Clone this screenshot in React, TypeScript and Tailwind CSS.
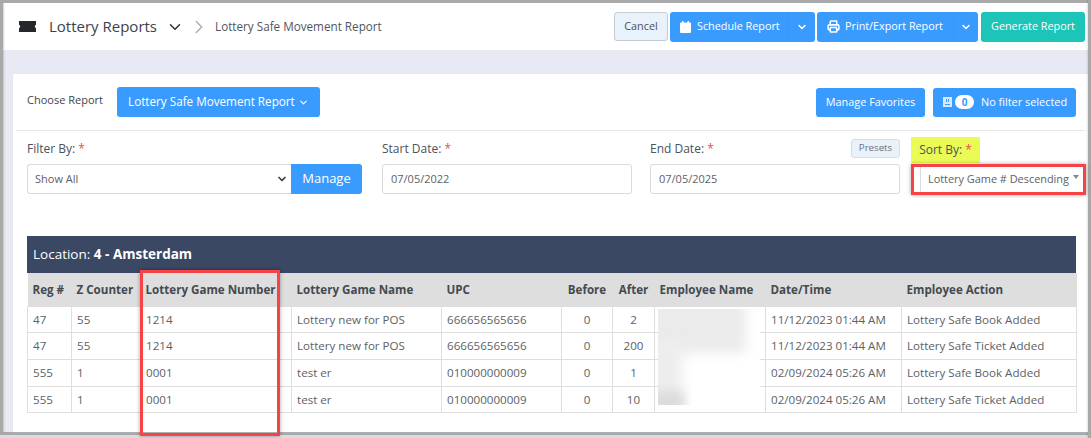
import React from "react";
import { ChevronDown, ChevronRight, Printer } from "lucide-react";

const rows = [
  ["47", "55", "1214", "Lottery new for POS", "666656565656", "0", "2", "11/12/2023 01:44 AM", "Lottery Safe Book Added", "h-[26px]"],
  ["47", "55", "1214", "Lottery new for POS", "666656565656", "0", "200", "11/12/2023 01:44 AM", "Lottery Safe Ticket Added", "h-[27px]"],
  ["555", "1", "0001", "test er", "010000000009", "0", "1", "02/09/2024 05:26 AM", "Lottery Safe Book Added", "h-[27px]"],
  ["555", "1", "0001", "test er", "010000000009", "0", "10", "02/09/2024 05:26 AM", "Lottery Safe Ticket Added", "h-[26px]"],
];
const Req = () => <span className="text-[#f4474f]">&nbsp;*</span>;
const Blue = ({ className = "", children }: { className?: string; children: React.ReactNode }) => (
  <div className={"flex items-center bg-[#3a9bff] text-white rounded-[3px] whitespace-nowrap " + className}>{children}</div>
);

export default function App() {
  return (
    <div className="relative w-[1091px] h-[438px] overflow-hidden bg-[#e8eaf3] font-['Open_Sans',sans-serif] text-[#444b52]">
      <div className="h-[3px] bg-[#a9a9a9]" />
      <div className="flex h-[429px]">
        <div className="w-[3px] bg-[#a9a9a9] shadow-[1px_0_2px_rgba(0,0,0,0.18)] z-10" />
        <div className="flex-1 flex flex-col min-w-0">
          <header className="h-[47px] bg-white flex items-center shrink-0">
            <svg width="17" height="11" viewBox="0 0 17 11" className="ml-[16px]"><path d="M0 0h17v3.8a1.8 1.8 0 0 0 0 3.4V11H0V7.2a1.8 1.8 0 0 0 0-3.4z" fill="#23262b" /></svg>
            <span className="ml-[13px] text-[15px] text-[#3d4249]">Lottery Reports</span>
            <ChevronDown size={18} strokeWidth={1.9} className="ml-[9px] text-[#2b2f35]" />
            <ChevronRight size={22} strokeWidth={1.5} className="ml-[4px] text-[#a8abb3]" />
            <span className="ml-[5px] text-[11.7px] text-[#50555c]">Lottery Safe Movement Report</span>
            <div className="ml-auto flex items-center h-[30px] mr-[6px] text-[10.8px]">
              <div className="h-[29px] w-[54px] mr-[2px] flex items-center justify-center bg-[#e9f2fb] border border-[#c3cbd3] rounded-[3px] text-[#48505a]">Cancel</div>
              <Blue className="h-[30px] w-[145px] mr-[2px]">
                <svg width="11" height="12" viewBox="0 0 11 12" className="ml-[10px]"><path d="M2 0h1.5v1.5h4V0H9v1.5h1a1 1 0 0 1 1 1V11a1 1 0 0 1-1 1H1a1 1 0 0 1-1-1V2.5a1 1 0 0 1 1-1h1z" fill="white" /></svg>
                <span className="ml-[6px]">Schedule Report</span>
                <div className="ml-auto w-[27px] h-full border-l border-[#3596f9] flex items-center justify-center"><ChevronDown size={12} strokeWidth={3} /></div>
              </Blue>
              <Blue className="h-[30px] w-[161px] mr-[3px]">
                <Printer size={13} strokeWidth={2.8} className="ml-[10px]" />
                <span className="ml-[5px]">Print/Export Report</span>
                <div className="ml-auto w-[25px] h-full border-l border-[#3596f9] flex items-center justify-center"><ChevronDown size={12} strokeWidth={3} /></div>
              </Blue>
              <div className="h-[30px] w-[104px] flex items-center justify-center bg-[#1cc5b7] text-white rounded-[3px]">Generate Report</div>
            </div>
          </header>
          <div className="flex-1 flex flex-col pt-[24px] pl-[10px] pr-[3px] min-h-0">
            <main className="flex-1 bg-white flex flex-col min-h-0 shadow-[0_0_1px_#d0d3dc]">
              <div className="h-[57px] mx-[3px] flex items-center border-b border-[#e8e8ec] pl-[11px] pr-[9px] shrink-0">
                <span className="text-[11px] text-[#3f454c] mt-[-4px]">Choose Report</span>
                <Blue className="ml-[14px] h-[30px] w-[203px] justify-center">
                  <span className="text-[11.7px]">Lottery Safe Movement Report</span>
                  <ChevronDown size={11} strokeWidth={2.5} className="ml-[3px]" />
                </Blue>
                <Blue className="ml-auto h-[29px] w-[109px] justify-center text-[10.9px]">Manage Favorites</Blue>
                <Blue className="ml-[8px] h-[29px] w-[143px] text-[10.9px]">
                  <svg width="9" height="10" viewBox="0 0 9 10" className="ml-[10px]"><path d="M0 0h9v10H0z" fill="#d5e8fd" /><path d="M3 2h1v3H3zM5 2h1v3H5zM2 7h5v1H2z" fill="#3a9bff" /></svg>
                  <span className="ml-[3px] h-[14px] w-[19px] bg-white rounded-full text-[#3a9bff] text-[10px] font-bold flex items-center justify-center">0</span>
                  <span className="ml-[7px]">No filter selected</span>
                </Blue>
              </div>
              <div className="h-[105px] flex pl-[14px] shrink-0">
                <div className="w-[335px] pt-[9px]">
                  <div className="h-[17px] text-[12px] leading-[17px] text-[#4c5259]">Filter By:<Req /></div>
                  <div className="mt-[7px] h-[30px] flex">
                    <div className="flex-1 border border-r-0 border-[#d9dadd] rounded-l-[3px] flex items-center pl-[7px] text-[11px] text-[#5d6166]">
                      Show All
                      <ChevronDown size={12} strokeWidth={3.5} className="ml-auto mr-[3px] text-[#3d4249]" />
                    </div>
                    <div className="w-[71px] bg-[#3a9bff] text-white text-[13px] rounded-r-[3px] flex items-center justify-center">Manage</div>
                  </div>
                </div>
                <div className="ml-[20px] w-[250px] pt-[9px]">
                  <div className="h-[17px] text-[12px] leading-[17px] text-[#4c5259]">Start Date:<Req /></div>
                  <div className="mt-[7px] h-[30px] border border-[#d9dadd] rounded-[3px] flex items-center pl-[8px] text-[11px] text-[#5d6166]">07/05/2022</div>
                </div>
                <div className="ml-[18px] w-[250px] pt-[9px]">
                  <div className="flex h-[17px] justify-between items-center">
                    <span className="text-[12px] leading-[17px] text-[#4c5259]">End Date:<Req /></span>
                    <span className="h-[19px] w-[49px] flex items-center justify-center bg-[#e9f2fb] border border-[#d5dde6] rounded-[3px] text-[9.7px] text-[#6a7079]">Presets</span>
                  </div>
                  <div className="mt-[7px] h-[30px] border border-[#d9dadd] rounded-[3px] flex items-center pl-[8px] text-[11px] text-[#5d6166]">07/05/2025</div>
                </div>
                <div className="ml-[11px] w-[170px] pt-[6px]">
                  <div className="w-[69px] h-[26px] bg-[#ebfb55] flex items-center justify-center text-[12px] text-[#4c5259]"><span>Sort By:<Req /></span></div>
                  <div className="relative mt-[3px] ml-[9px] h-[27px] flex items-center pl-[7px] text-[10.9px] text-[#5d6166] border-l border-[#d9dadd] whitespace-nowrap">
                    Lottery Game # Descending
                    <span className="absolute right-[2px] top-[9px] w-0 h-0 border-x-[3px] border-x-transparent border-t-[4px] border-t-[#888]" />
                  </div>
                </div>
              </div>
              <div className="pl-[14px] pr-[12px]">
                <div className="h-[37px] bg-[#3b4864] text-white flex items-center pl-[6px] text-[13.5px]">Location:&nbsp;<b className="font-bold">4 - Amsterdam</b></div>
                <table className="w-full table-fixed border-collapse text-[11.6px] text-[#5d6166]">
                  <colgroup>
                    {[44, 69, 151, 150, 120, 51, 42, 111, 136, 175].map((w, i) => <col key={i} style={{ width: w }} />)}
                  </colgroup>
                  <thead>
                    <tr className="h-[33px] bg-[#dedede] text-[#444a50] text-left whitespace-nowrap">
                      {["Reg #", "Z Counter", "Lottery Game Number", "Lottery Game Name", "UPC", "Before", "After", "Employee Name", "Date/Time", "Employee Action"].map((h, i) => (
                        <th key={h} className={"font-bold overflow-visible " + (i === 5 || i === 6 ? "text-center px-0" : "px-[5px]")}>{h}</th>
                      ))}
                    </tr>
                  </thead>
                  <tbody>
                    {rows.map((r, i) => (
                      <tr key={i} className={r[9]}>
                        {[0, 1, 2, 3, 4].map((c) => <td key={c} className="border border-[#dedede] px-[5px] pt-[1px] pb-0">{r[c]}</td>)}
                        <td className="border border-[#dedede] text-center px-0 pt-[1px] pb-0">{r[5]}</td>
                        <td className="border border-[#dedede] text-center px-0 pt-[1px] pb-0">{r[6]}</td>
                        <td className="border border-[#dedede]" />
                        <td className="border border-[#dedede] px-[5px] pt-[1px] pb-0 whitespace-nowrap">{r[7]}</td>
                        <td className="border border-[#dedede] px-[5px] pt-[1px] pb-0 whitespace-nowrap">{r[8]}</td>
                      </tr>
                    ))}
                  </tbody>
                </table>
              </div>
            </main>
          </div>
        </div>
      </div>
      <div className="h-[3px] bg-[#a9a9a9]" />
      <div className="h-[3px] bg-[#dcdcdc]" />
      <div className="absolute right-0 top-0 bottom-0 w-[3px] bg-[#a9a9a9] shadow-[-1px_0_2px_rgba(0,0,0,0.12)]" />

      {/* redaction over the employee names */}
      <div className="absolute left-[658px] top-[309px] w-[102px] h-[96px] bg-white overflow-hidden">
        <div className="absolute left-[-12px] top-[-12px] w-[100px] h-[56px] bg-[#ebebeb] blur-[6px]" />
        <div className="absolute left-[-12px] top-[30px] w-[36px] h-[80px] bg-[#ededed] blur-[6px]" />
        <div className="absolute left-[-12px] top-[82px] w-[38px] h-[24px] bg-[#dcdcdc] blur-[5px]" />
      </div>

      {/* annotation boxes */}
      <div className="absolute left-[140px] top-[270px] w-[140px] h-[166px] border-[3px] border-[#f64348] shadow-[0_0_4px_rgba(0,0,0,0.35)]" />
      <div className="absolute left-[911px] top-[164px] w-[175px] h-[31px] border-[3px] border-[#f64348] shadow-[0_0_4px_rgba(0,0,0,0.35)]" />
    </div>
  );
}
